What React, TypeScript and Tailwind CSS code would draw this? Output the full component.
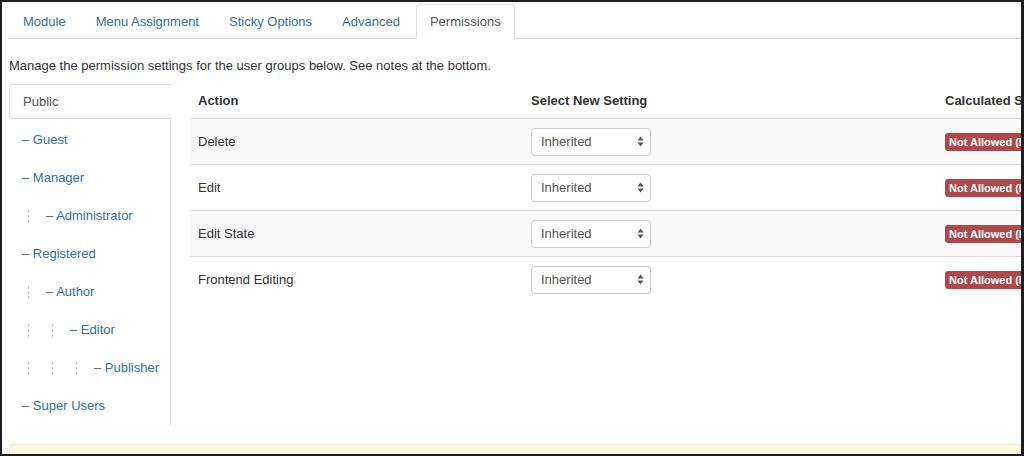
import React from "react"

const tabs = ["Module", "Menu Assignment", "Sticky Options", "Advanced", "Permissions"]

const groups = [
  { name: "Guest", level: 0 },
  { name: "Manager", level: 0 },
  { name: "Administrator", level: 1 },
  { name: "Registered", level: 0 },
  { name: "Author", level: 1 },
  { name: "Editor", level: 2 },
  { name: "Publisher", level: 3 },
  { name: "Super Users", level: 0 },
]

const actions = ["Delete", "Edit", "Edit State", "Frontend Editing"]

function SelectArrows() {
  return (
    <svg width="7" height="11" viewBox="0 0 7 11" className="shrink-0">
      <path d="M3.5 0.5 L6.5 4.5 L0.5 4.5 Z" fill="#555" />
      <path d="M3.5 10.5 L6.5 6.5 L0.5 6.5 Z" fill="#555" />
    </svg>
  )
}

export default function App() {
  return (
    <div
      className="w-[1024px] h-[456px] overflow-hidden bg-white border-t-2 border-l-2 border-b-2 border-r-[3px] border-[#1e1e1e] text-[13px] text-[#333]"
      style={{ fontFamily: '"Liberation Sans", Arial, sans-serif' }}
    >
      <div className="h-full overflow-hidden pl-[7px]">
        {/* tabs */}
        <div className="mt-[2px] flex items-end border-b border-[#ddd] w-[1100px]">
          {tabs.map((t) => {
            const active = t === "Permissions"
            return (
              <div
                key={t}
                className={
                  active
                    ? "h-[35px] -mb-px mr-[2px] px-[13px] flex items-center leading-5 rounded-t-[4px] border border-[#ddd] border-b-white bg-white text-[#555]"
                    : "h-[35px] -mb-px mr-[2px] px-[13px] flex items-center leading-5 border border-transparent text-[#3071a9]"
                }
              >
                {t}
              </div>
            )
          })}
        </div>

        <p className="mt-[17px] leading-5">
          Manage the permission settings for the user groups below. See notes at the bottom.
        </p>

        <div className="mt-[8px] flex">
          {/* group list */}
          <div className="w-[162px] shrink-0 flex flex-col">
            <div className="h-[35px] flex items-center pl-[13px] border-t border-l border-b border-[#ddd] rounded-l-[4px] text-[#555]">
              Public
            </div>
            <ul className="pt-[2px] border-r border-[#ddd]">
              {groups.map((g) => (
                <li key={g.name} className="h-[38px] flex items-center pl-[13px] text-[#3071a9] whitespace-nowrap">
                  {Array.from({ length: g.level }).map((_, i) => (
                    <span key={i} className="w-[24px] h-[38px] shrink-0 flex items-center">
                      <span className="ml-[6px] h-[13px] border-l border-dashed border-[#c8c8c8]" />
                    </span>
                  ))}
                  <span>– {g.name}</span>
                </li>
              ))}
            </ul>
          </div>

          {/* actions table */}
          <div className="ml-[19px] w-[1000px] shrink-0">
            <div className="grid grid-cols-[333px_414px_1fr] h-[34px] items-center font-bold">
              <div className="px-[8px]">Action</div>
              <div className="px-[8px]">Select New Setting</div>
              <div className="px-[8px] whitespace-nowrap">Calculated Setting</div>
            </div>
            {actions.map((a, i) => (
              <div
                key={a}
                className={
                  i % 2 === 0
                    ? "grid grid-cols-[333px_414px_1fr] h-[46px] items-center border-t border-[#ddd] bg-[#f9f9f9]"
                    : "grid grid-cols-[333px_414px_1fr] h-[46px] items-center border-t border-[#ddd] bg-white"
                }
              >
                <div className="px-[8px]">{a}</div>
                <div className="px-[8px]">
                  <div className="w-[120px] h-[28px] flex items-center justify-between pl-[9px] pr-[6px] bg-white border border-[#ccc] rounded-[4px] text-[#555]">
                    <span>Inherited</span>
                    <SelectArrows />
                  </div>
                </div>
                <div className="px-[8px]">
                  <span className="inline-flex items-center h-[18px] px-[4px] rounded-[3px] bg-[#b0474a] text-white text-[11px] font-bold whitespace-nowrap">
                    Not Allowed (Inherited)
                  </span>
                </div>
              </div>
            ))}
          </div>
        </div>

        {/* notes alert */}
        <div className="mt-[19px] h-[20px] w-[1100px] rounded-tl-[4px] border-t border-l border-dotted border-[#f2dfb8] bg-[#fcf8e3]" />
      </div>
    </div>
  )
}
